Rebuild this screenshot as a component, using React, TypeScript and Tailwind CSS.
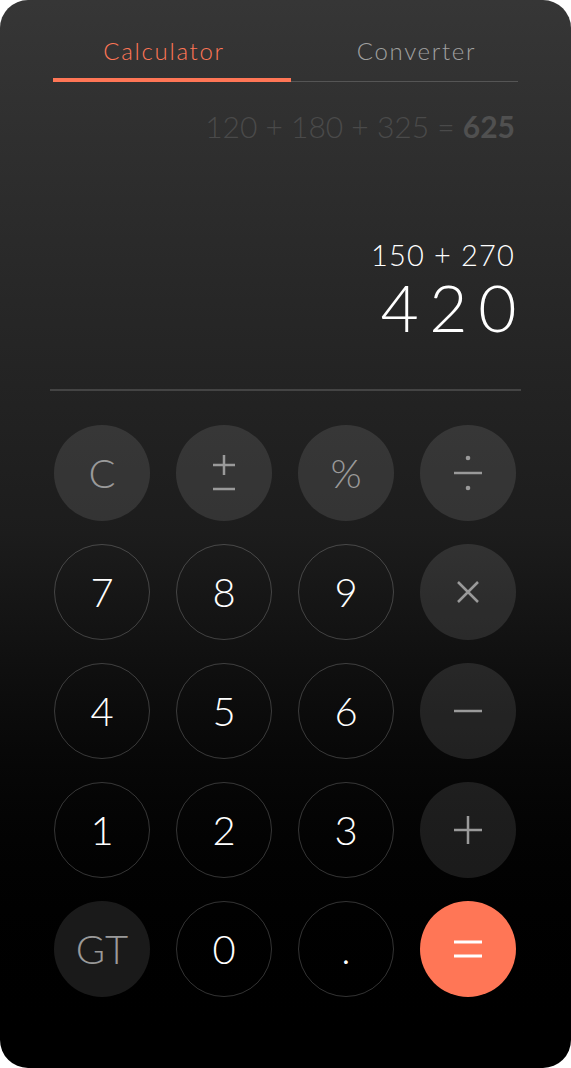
import { ReactNode } from "react";

type Kind = "fn" | "num" | "eq";

const Divide = () => (
  <svg width="30" height="36" viewBox="0 0 30 36" fill="none">
    <line x1="1" y1="18" x2="29" y2="18" stroke="#9a9a9a" strokeWidth="2.5" />
    <circle cx="15" cy="3" r="2.3" fill="#9a9a9a" />
    <circle cx="15" cy="33" r="2.3" fill="#9a9a9a" />
  </svg>
);

const Times = () => (
  <svg width="24" height="24" viewBox="0 0 24 24" fill="none">
    <path d="M2 2 L22 22 M22 2 L2 22" stroke="#9a9a9a" strokeWidth="2.5" />
  </svg>
);

const Minus = () => (
  <svg width="30" height="4" viewBox="0 0 30 4" fill="none">
    <line x1="1" y1="2" x2="29" y2="2" stroke="#9a9a9a" strokeWidth="2.5" />
  </svg>
);

const Plus = () => (
  <svg width="30" height="30" viewBox="0 0 30 30" fill="none">
    <path d="M1 15 H29 M15 1 V29" stroke="#9a9a9a" strokeWidth="2.5" />
  </svg>
);

const PlusMinus = () => (
  <svg width="26" height="36" viewBox="0 0 26 36" fill="none">
    <path d="M2 10 H24 M13 0 V20 M2 34 H24" stroke="#9a9a9a" strokeWidth="2.5" />
  </svg>
);

const Equals = () => (
  <svg width="30" height="18" viewBox="0 0 30 18" fill="none">
    <path d="M1 2 H29 M1 16 H29" stroke="#ffffff" strokeWidth="3" />
  </svg>
);

const keys: { label: ReactNode; kind: Kind }[] = [
  { label: "C", kind: "fn" },
  { label: <PlusMinus />, kind: "fn" },
  { label: "%", kind: "fn" },
  { label: <Divide />, kind: "fn" },
  { label: "7", kind: "num" },
  { label: "8", kind: "num" },
  { label: "9", kind: "num" },
  { label: <Times />, kind: "fn" },
  { label: "4", kind: "num" },
  { label: "5", kind: "num" },
  { label: "6", kind: "num" },
  { label: <Minus />, kind: "fn" },
  { label: "1", kind: "num" },
  { label: "2", kind: "num" },
  { label: "3", kind: "num" },
  { label: <Plus />, kind: "fn" },
  { label: "GT", kind: "fn" },
  { label: "0", kind: "num" },
  { label: ".", kind: "num" },
  { label: <Equals />, kind: "eq" },
];

const keyStyle: Record<Kind, string> = {
  fn: "bg-white/10 text-[#9a9a9a]",
  num: "border border-white/20 text-white",
  eq: "bg-[#ff7656] text-white",
};

const App = () => {
  return (
    <div className="w-[571px] h-[1068px] bg-white">
      <div
        className="w-[571px] h-[1068px] rounded-[28px] bg-linear-to-b from-[#363636] via-[#1c1c1c] to-black px-[53px] pt-[35px] overflow-hidden"
        style={{ fontFamily: "Lato, 'Open Sans', sans-serif" }}
      >
        {/* tabs */}
        <div className="flex text-[24px] leading-[32px] font-light tracking-[0.07em]">
          <div className="w-[238px] pr-[16px] text-center text-[#ff7656]">
            Calculator
          </div>
          <div className="w-[227px] pl-[24px] text-center text-[#a0a0a0]">
            Converter
          </div>
        </div>
        <div className="flex items-end mt-[10px] h-[5px]">
          <div className="w-[238px] h-[4px] bg-[#ff7656]" />
          <div className="w-[227px] h-[1px] bg-[#555]" />
        </div>

        {/* history */}
        <div className="mt-[26px] text-right text-[30px] leading-[36px] font-light text-[#4a4a4a] pr-[3px]">
          120 + 180 + 325 = <span className="font-bold text-[#505050]">625</span>
        </div>

        {/* current */}
        <div className="mt-[94px] text-right text-[29px] leading-[34px] font-light text-white pr-[3px] tracking-[0.04em]">
          150 + 270
        </div>
        <div className="mt-[2px] text-right text-[66px] leading-[66px] font-light text-white tracking-[0.16em] -mr-[9px]">
          420
        </div>

        <div className="mt-[49px] -mx-[3px] h-[2px] bg-[#444]" />

        {/* keypad */}
        <div className="mt-[34px] ml-[1px] grid grid-cols-[repeat(4,96px)] gap-x-[26px] gap-y-[23px]">
          {keys.map((k, i) => (
            <button
              key={i}
              className={`w-[96px] h-[96px] rounded-full flex items-center justify-center text-[40px] font-light leading-none ${keyStyle[k.kind]}`}
            >
              {k.label}
            </button>
          ))}
        </div>
      </div>
    </div>
  );
};

export default App;
